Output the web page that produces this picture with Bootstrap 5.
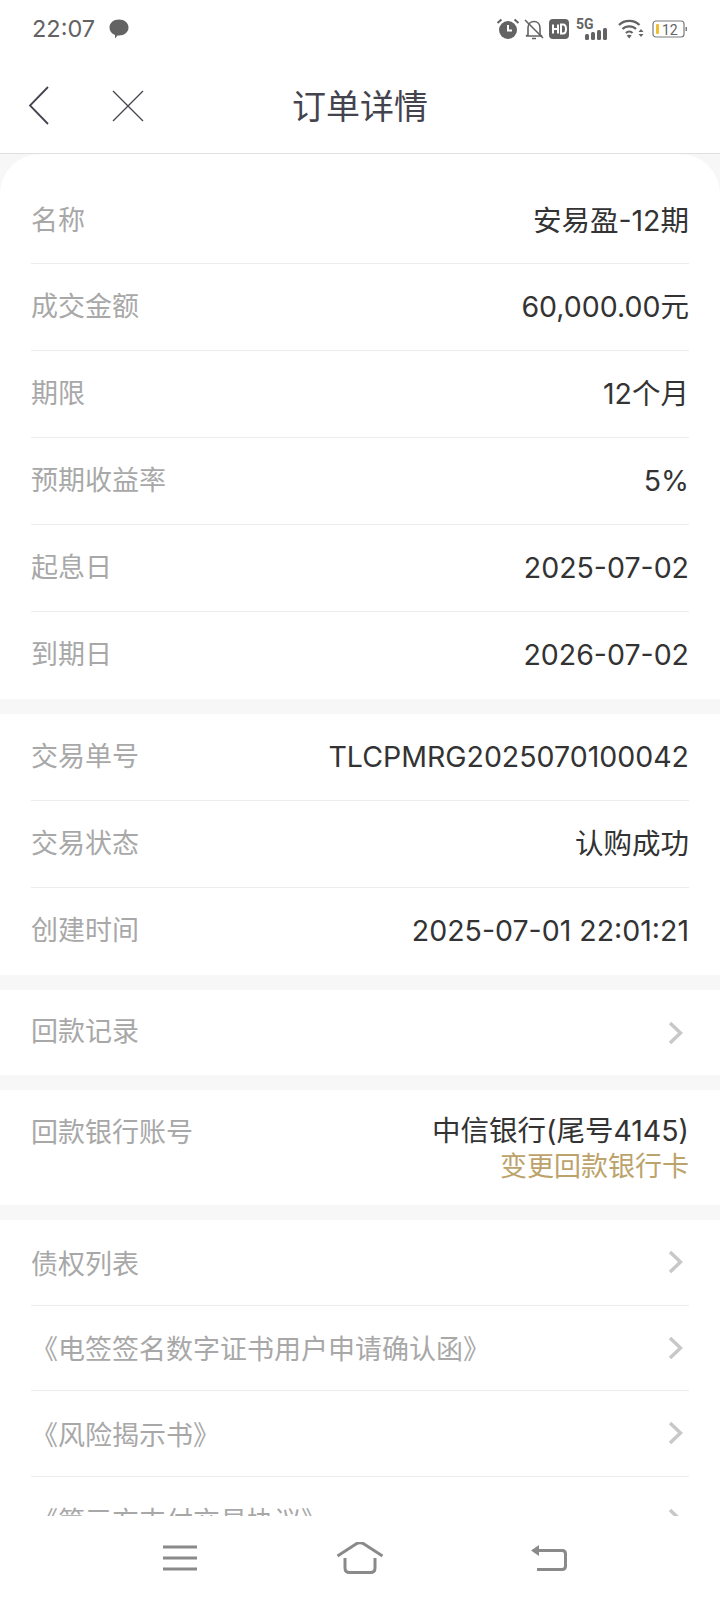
<!DOCTYPE html>
<html lang="zh-CN">
<head>
  <meta charset="UTF-8">
  <title>订单详情</title>
  <meta name="viewport" content="width=device-width, initial-scale=1">
  <link href="https://cdn.jsdelivr.net/npm/bootstrap@5.3.0/dist/css/bootstrap.min.css" rel="stylesheet">
  <style>
    html, body { height: 1600px; overflow: hidden; }
    body {
      background: #f7f7f7;
      font-family: "Inter", "Noto Sans CJK SC", sans-serif;
      color: #333;
    }
    .phone { width: 720px; height: 1600px; }
    .status-bar { height: 58px; background: #fff; padding: 0 32px; color: #636363; }
    .status-time { font-size: 23.500px; line-height: 1; margin-right: 13px; }
    .icon-gap-sm { margin-left: 3px; }
    .icon-gap-md { margin-left: 6px; }
    .title-bar { height: 96px; background: #fff; border-bottom: 1px solid #dfdfdf; padding-left: 28px; }
    .title-text { font-size: 34px; line-height: 1; color: #44444f; left: 0; right: 0; top: 32px; }
    .close-gap { margin-left: 62px; }
    .scroll-area { height: 1362px; overflow: hidden; }
    .info-group { background: #fff; padding: 0 31px; margin-bottom: 15px; }
    .info-group.top-group { border-radius: 40px 40px 0 0; }
    .info-row {
      height: 87px;
      border-bottom: 1px solid #ececec;
      font-size: 27px;
    }
    .info-row:last-child { border-bottom: 0; }
    .row-first { height: 110px; padding-top: 25px; }
    .row-short { height: 85px; }
    .row-doc { height: 85.600px; padding-top: 5px; }
    .row-label { color: #a8a8a8; }
    .row-value { color: #333; font-size: 28.500px; }
    .row-bank { height: 115px; padding-top: 23px; align-items: flex-start !important; }
    .row-bank .row-value { line-height: 36px; }
    .bank-link { color: #bca36b; line-height: 36px; }
    .row-arrow { margin-right: 6px; }
    .row-doc .row-arrow { margin-top: -5px; }
    .nav-bottom { height: 84px; background: #fff; padding-left: 163px; }
    .nav-gap-left { margin-left: 139px; }
    .nav-gap-right { margin-left: 147px; }
  </style>
</head>
<body>
<div class="phone d-flex flex-column">

  <!-- status bar -->
  <div class="status-bar d-flex align-items-center justify-content-between">
    <div class="d-flex align-items-center">
      <span class="status-time">22:07</span>
      <svg width="22" height="22" viewBox="0 0 22 22"><path d="M11 1.500c5.400 0 9.500 3.400 9.500 8 0 4.500-4.100 8-9.500 8h-1.500l-2.500 3v-3.500c-3.500-1.200-5.500-4-5.500-7.500 0-4.600 4.100-8 9.500-8z" fill="#636363"/></svg>
    </div>
    <div class="d-flex align-items-center">
      <svg width="24" height="24" viewBox="0 0 24 24"><circle cx="12" cy="13" r="9" fill="#636363"/><path d="M12 8v5.500h4" stroke="#fff" stroke-width="2" fill="none"/><path d="M1.500 6l4-3.500M22.500 6l-4-3.500" stroke="#636363" stroke-width="2"/></svg>
      <svg width="22" height="24" viewBox="0 0 22 24" class="icon-gap-sm"><path d="M5 18v-7c0-4 2.500-6.500 6-6.500s6 2.500 6 6.500v7l2 1H3zM9 21.500h4" stroke="#636363" stroke-width="1.600" fill="none"/><path d="M2 3l18 18" stroke="#636363" stroke-width="1.600"/></svg>
      <svg width="22" height="22" viewBox="0 0 22 22" class="icon-gap-sm"><rect x="1" y="1" width="20" height="20" rx="4" fill="#636363"/><path d="M5 6.500v9M10 6.500v9M5 11h5" stroke="#fff" stroke-width="2" fill="none"/><path d="M13 6.500v9h2c2 0 3-1.800 3-4.500s-1-4.500-3-4.500z" stroke="#fff" stroke-width="2" fill="none"/></svg>
      <svg width="34" height="24" viewBox="0 0 34 24" class="icon-gap-md"><text x="0" y="12" font-family="Roboto" font-weight="700" font-size="14" fill="#636363">5G</text><rect x="9" y="17" width="4" height="6" rx="1.500" fill="#636363"/><rect x="15" y="15" width="4" height="8" rx="1.500" fill="#636363"/><rect x="21" y="13" width="4" height="10" rx="1.500" fill="#636363"/><rect x="27" y="11" width="4" height="12" rx="1.500" fill="#636363"/></svg>
      <svg width="26" height="22" viewBox="0 0 26 22" class="ms-2"><path d="M1 7c5.500-5.500 15-5.500 20.500 0M4.500 11c3.500-3.500 10-3.500 13.500 0M8 15c1.800-1.800 4.700-1.800 6.500 0" stroke="#636363" stroke-width="2.200" fill="none"/><path d="M11.200 20.500l-2.500-3c1.500-1 3.500-1 5 0z" fill="#636363"/><path d="M20.500 14l2.500-3 2.500 3zM20.500 16l2.500 3 2.500-3z" fill="#636363"/></svg>
      <div class="ms-2 d-flex align-items-center">
        <svg width="36" height="20" viewBox="0 0 36 20"><rect x="1" y="2" width="31" height="16" rx="3" fill="none" stroke="#7a7a7a" stroke-width="1.200"/><rect x="4" y="5" width="3" height="10" rx="1" fill="#f0bd2e"/><text x="10" y="15.500" font-family="Roboto" font-size="14" fill="#636363">12</text><rect x="33.500" y="8" width="1.500" height="4" fill="#7a7a7a"/></svg>
      </div>
    </div>
  </div>

  <!-- title -->
  <div class="title-bar d-flex align-items-center position-relative">
    <svg width="22" height="42" viewBox="0 0 22 42"><path d="M20 2L2 20.500 20 39" stroke="#44444f" stroke-width="1.800" fill="none"/></svg>
    <svg width="32" height="32" viewBox="0 0 32 32" class="close-gap"><path d="M1 1l30 30M31 1L1 31" stroke="#44444f" stroke-width="1.300" fill="none"/></svg>
    <div class="title-text position-absolute text-center">订单详情</div>
  </div>

  <!-- content -->
  <div class="scroll-area">
    <div class="info-group top-group">
      <div class="info-row row-first d-flex align-items-center justify-content-between"><span class="row-label">名称</span><span class="row-value">安易盈-12期</span></div>
      <div class="info-row d-flex align-items-center justify-content-between"><span class="row-label">成交金额</span><span class="row-value">60,000.00元</span></div>
      <div class="info-row d-flex align-items-center justify-content-between"><span class="row-label">期限</span><span class="row-value">12个月</span></div>
      <div class="info-row d-flex align-items-center justify-content-between"><span class="row-label">预期收益率</span><span class="row-value">5%</span></div>
      <div class="info-row d-flex align-items-center justify-content-between"><span class="row-label">起息日</span><span class="row-value">2025-07-02</span></div>
      <div class="info-row d-flex align-items-center justify-content-between"><span class="row-label">到期日</span><span class="row-value">2026-07-02</span></div>
    </div>
    <div class="info-group">
      <div class="info-row d-flex align-items-center justify-content-between"><span class="row-label">交易单号</span><span class="row-value">TLCPMRG2025070100042</span></div>
      <div class="info-row d-flex align-items-center justify-content-between"><span class="row-label">交易状态</span><span class="row-value">认购成功</span></div>
      <div class="info-row d-flex align-items-center justify-content-between"><span class="row-label">创建时间</span><span class="row-value">2025-07-01 22:01:21</span></div>
    </div>
    <div class="info-group">
      <div class="info-row row-short d-flex align-items-center justify-content-between"><span class="row-label">回款记录</span>
        <svg class="row-arrow" width="15" height="24" viewBox="0 0 15 24"><path d="M2 2l10.500 10L2 22" stroke="#c8c8c8" stroke-width="3.500" fill="none"/></svg></div>
    </div>
    <div class="info-group">
      <div class="info-row row-bank d-flex justify-content-between"><span class="row-label">回款银行账号</span>
        <div class="text-end"><div class="row-value">中信银行(尾号4145)</div><div class="bank-link">变更回款银行卡</div></div></div>
    </div>
    <div class="info-group">
      <div class="info-row row-doc d-flex align-items-center justify-content-between"><span class="row-label">债权列表</span>
        <svg class="row-arrow" width="15" height="24" viewBox="0 0 15 24"><path d="M2 2l10.500 10L2 22" stroke="#c8c8c8" stroke-width="3.500" fill="none"/></svg></div>
      <div class="info-row row-doc d-flex align-items-center justify-content-between"><span class="row-label">《电签签名数字证书用户申请确认函》</span>
        <svg class="row-arrow" width="15" height="24" viewBox="0 0 15 24"><path d="M2 2l10.500 10L2 22" stroke="#c8c8c8" stroke-width="3.500" fill="none"/></svg></div>
      <div class="info-row row-doc d-flex align-items-center justify-content-between"><span class="row-label">《风险揭示书》</span>
        <svg class="row-arrow" width="15" height="24" viewBox="0 0 15 24"><path d="M2 2l10.500 10L2 22" stroke="#c8c8c8" stroke-width="3.500" fill="none"/></svg></div>
      <div class="info-row row-doc d-flex align-items-center justify-content-between"><span class="row-label">《第三方支付交易协议》</span>
        <svg class="row-arrow" width="15" height="24" viewBox="0 0 15 24"><path d="M2 2l10.500 10L2 22" stroke="#c8c8c8" stroke-width="3.500" fill="none"/></svg></div>
    </div>
  </div>

  <!-- system nav -->
  <div class="nav-bottom d-flex align-items-center">
    <svg width="34" height="26" viewBox="0 0 34 26"><path d="M0 2h34M0 13h34M0 24h34" stroke="#8a8a8a" stroke-width="3"/></svg>
    <svg class="nav-gap-left" width="48" height="32" viewBox="0 0 48 32"><path d="M1.500 14L20 2c2.500-1.500 5.500-1.500 8 0l18.500 12" stroke="#8a8a8a" stroke-width="3" fill="none"/><path d="M9 16v10c0 3 1.500 4.500 4.500 4.500h21c3 0 4.500-1.500 4.500-4.500V16" stroke="#8a8a8a" stroke-width="3" fill="none"/></svg>
    <svg class="nav-gap-right" width="36" height="28" viewBox="0 0 36 28"><path d="M0 6.500L8 1v11z" fill="#8a8a8a"/><path d="M6 6.500h25c2.500 0 3.500 1 3.500 3.500v12c0 2.500-1 3.500-3.500 3.500H6" stroke="#8a8a8a" stroke-width="3" fill="none"/></svg>
  </div>
</div>
<script src="https://cdn.jsdelivr.net/npm/bootstrap@5.3.0/dist/js/bootstrap.bundle.min.js"></script>
</body>
</html>
